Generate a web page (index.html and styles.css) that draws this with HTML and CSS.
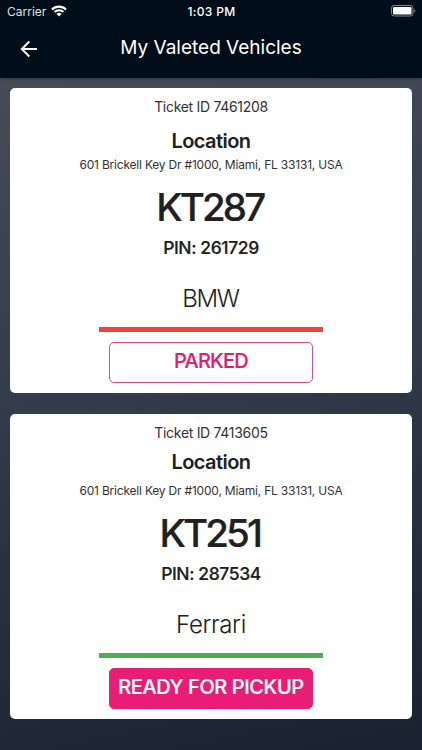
FILE: index.html
```html
<!DOCTYPE html>
<html lang="en">
<head>
<meta charset="utf-8">
<title>My Valeted Vehicles</title>
<link rel="stylesheet" href="styles.css">
</head>
<body>
<header class="top">
  <div class="status">
    <div class="carrier"><span>Carrier</span>
      <svg width="16" height="12" viewBox="0 0 16 12" fill="none" stroke="#fff" stroke-width="2.1"><path d="M1 4.5a10 10 0 0 1 14 0M3.5 7.1a6.4 6.4 0 0 1 9 0"/><path d="M5.5 8.9a3.6 3.6 0 0 1 5 0L8 11.5z" fill="#fff" stroke="none"/></svg>
    </div>
    <div class="time">1:03 PM</div>
    <div class="battery"><svg width="25" height="12" viewBox="0 0 25 12"><rect x=".5" y=".5" width="21.5" height="10.5" rx="2.7" fill="none" stroke="#858b92"/><rect x="2" y="2" width="18.5" height="7.5" rx="1.3" fill="#fff"/><path d="M23.3 4v3.7c1.4-.6 1.4-3.1 0-3.7z" fill="#858b92"/></svg></div>
  </div>
  <nav class="nav">
    <svg class="back" width="18" height="18" viewBox="0 0 18 18" fill="none" stroke="#fff" stroke-width="2"><path d="M17 9H2M9.3 1.5L1.8 9l7.5 7.5"/></svg>
    <h1>My Valeted Vehicles</h1>
  </nav>
</header>
<main class="list">
  <article class="card">
    <p class="ticket">Ticket ID 7461208</p>
    <h2 class="location">Location</h2>
    <p class="address">601 Brickell Key Dr #1000, Miami, FL 33131, USA</p>
    <p class="code">KT287</p>
    <p class="pin">PIN: 261729</p>
    <p class="make bmw">BMW</p>
    <div class="bar red"></div>
    <button class="action outline">PARKED</button>
  </article>
  <article class="card second">
    <p class="ticket">Ticket ID 7413605</p>
    <h2 class="location">Location</h2>
    <p class="address">601 Brickell Key Dr #1000, Miami, FL 33131, USA</p>
    <p class="code">KT251</p>
    <p class="pin">PIN: 287534</p>
    <p class="make">Ferrari</p>
    <div class="bar green"></div>
    <button class="action solid">READY FOR PICKUP</button>
  </article>
</main>
</body>
</html>
```
FILE: styles.css
```css
* { box-sizing: border-box; }
body { margin: 0; height: 750px; overflow: hidden; font-family: Inter, "Liberation Sans", sans-serif; color: #202020; background: linear-gradient(168deg, #464b58 10%, #333c4a 48%, #192430 98%); }
h1, h2, p { margin: 0; white-space: nowrap; }
.top { height: 78px; background: #010d18; color: #fff; box-shadow: 0 1px 3px rgba(0, 0, 0, .3); }
.status { height: 22px; display: grid; grid-template-columns: 1fr auto 1fr; align-items: center; padding: 0 6px 0 7px; font-size: 12px; }
.carrier { display: flex; align-items: center; gap: 5px; color: #dfe2e5; }
.time { font-weight: 500; letter-spacing: .35px; }
.battery { display: flex; justify-content: flex-end; }
.nav { height: 52px; display: grid; grid-template-columns: 60px 1fr 60px; align-items: center; }
.back { margin: 2px 0 0 20px; }
h1 { font-size: 19px; line-height: 52px; font-weight: 400; letter-spacing: 0; text-align: center; }
.list { padding: 10px; display: flex; flex-direction: column; gap: 21px; }
.card { height: 305px; border-radius: 5px; background: #fff; display: flex; flex-direction: column; align-items: center; }
.ticket { height: 37px; line-height: 37px; font-size: 14px; letter-spacing: -.3px; color: #333; }
.location { height: 31px; line-height: 32px; font-size: 20px; font-weight: 600; letter-spacing: -.55px; }
.address { height: 17px; line-height: 17px; font-size: 12px; letter-spacing: -.2px; color: #333; }
.code { height: 69px; line-height: 69px; font-size: 38.5px; font-weight: 500; letter-spacing: -2.9px; padding-right: 2.5px; -webkit-text-stroke: .2px; }
.pin { height: 12px; line-height: 12px; font-size: 17.5px; font-weight: 500; letter-spacing: -.4px; -webkit-text-stroke: .2px; }
.make { height: 73px; line-height: 89px; font-size: 24px; font-weight: 300; letter-spacing: -.35px; }
.bmw { letter-spacing: -1.3px; padding-right: 1px; }
.bar { width: 224px; height: 5px; }
.red { background: #f04438; }
.green { background: #50ad55; }
.action { width: 204px; height: 41px; margin-top: 10px; padding: 0 0 3px; border: 1px solid #dc4a8a; border-radius: 5px; font: 500 20px/36px Inter, "Liberation Sans", sans-serif; white-space: nowrap; }
.outline { background: #fff; color: #d9226f; letter-spacing: -.8px; -webkit-text-stroke: .2px; }
.solid { background: #e81e76; border-color: #e81e76; color: #fff; letter-spacing: -.4px; -webkit-text-stroke: .2px; }
.second .location { height: 22px; line-height: 22px; }
.second .address { height: 34px; line-height: 35px; }
.second .code { height: 52px; line-height: 52px; }
.second .pin { height: 30px; line-height: 30px; }
.second .make { height: 64px; line-height: 71px; }
```
